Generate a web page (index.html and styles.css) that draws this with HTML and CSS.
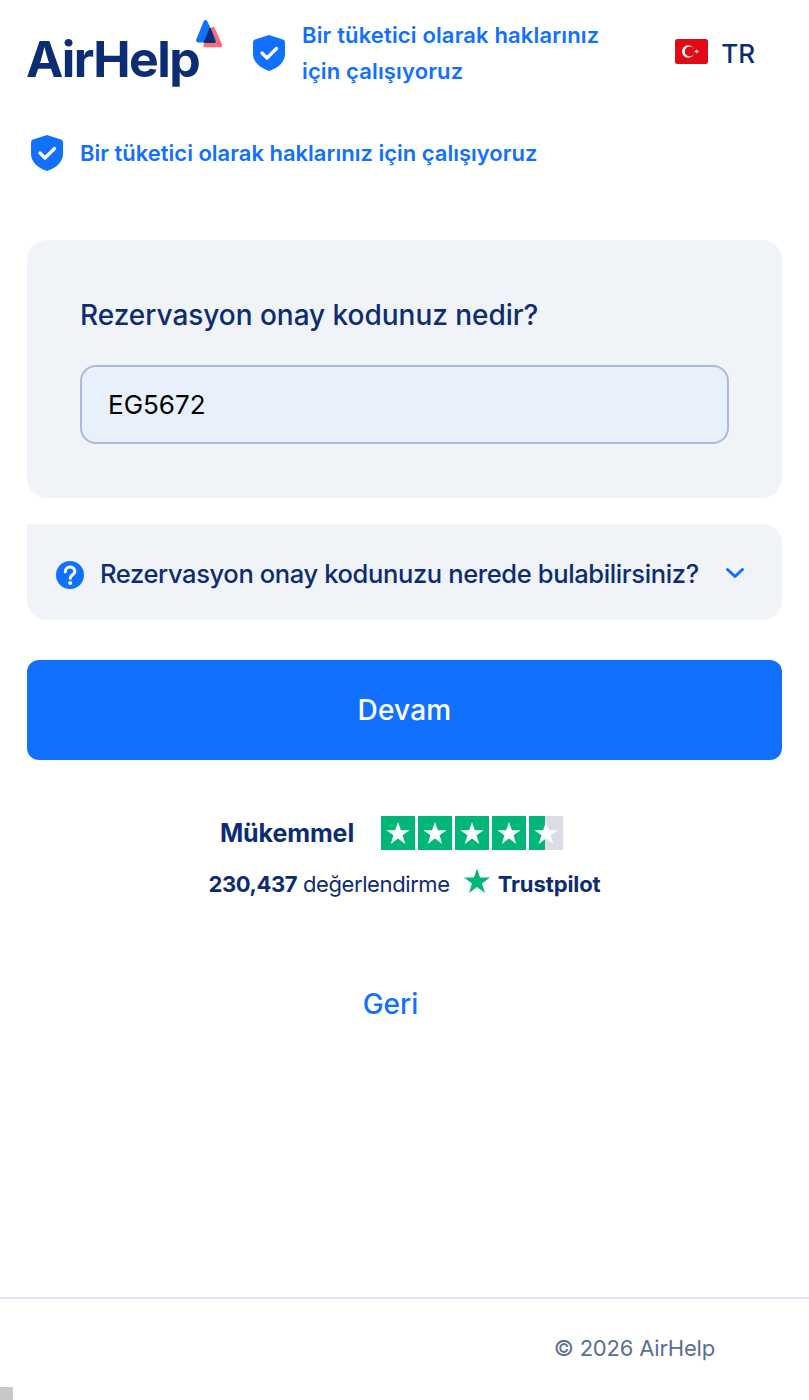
FILE: index.html
```html
<!DOCTYPE html>
<html lang="tr">
<head>
<meta charset="utf-8">
<title>AirHelp</title>
<link rel="stylesheet" href="styles.css">
</head>
<body>
<div class="page">
  <header class="topbar">
    <a class="logo">
      <span class="logo-word">AirHelp</span>
      <svg class="logo-mark" viewBox="0 0 28 29" aria-hidden="true">
        <path d="M18 9.5 L25.5 26.5 H10 Z" fill="#ff6b78" stroke="#ff6b78" stroke-width="3.5" stroke-linejoin="round"/>
        <path d="M10.5 3 L3 21.5 H19 Z" fill="#1270ff" stroke="#1270ff" stroke-width="4" stroke-linejoin="round"/>
        <path d="M15.2 9 L20.2 23.4 H9 Z" fill="#0c2c73" stroke="#0c2c73" stroke-width="1" stroke-linejoin="round"/>
      </svg>
    </a>
    <div class="promise">
      <svg class="shield" viewBox="0 0 32 38" aria-hidden="true">
        <path d="M16 1 L30 5.5 Q32 6.2 32 8.5 V20 C32 28 25 34 16 37 C7 34 0 28 0 20 V8.5 Q0 6.2 2 5.5 Z" fill="#1270ff"/>
        <path d="M9 19 L14 24 L23.5 14.5" fill="none" stroke="#fff" stroke-width="3.2" stroke-linecap="round" stroke-linejoin="round"/>
      </svg>
      <p class="promise-text">Bir tüketici olarak haklarınız<br>için çalışıyoruz</p>
    </div>
    <div class="lang">
      <svg class="flag" viewBox="0 0 33 25" aria-hidden="true">
        <rect width="33" height="25" rx="2.5" fill="#e30a17"/>
        <circle cx="13.2" cy="12.5" r="6.2" fill="#fff"/>
        <circle cx="14.8" cy="12.5" r="5" fill="#e30a17"/>
        <path d="M19 12.5 L23.6 10.9 L22 12.5 L23.6 14.1 Z M21.5 9.6 L22.1 15.4 L20.4 11.2 L24.2 12.5 L20.4 13.8 Z" fill="#fff"/>
      </svg>
      <span class="lang-code">TR</span>
    </div>
  </header>

  <div class="promise promise-wide">
    <svg class="shield" viewBox="0 0 32 38" aria-hidden="true">
      <path d="M16 1 L30 5.5 Q32 6.2 32 8.5 V20 C32 28 25 34 16 37 C7 34 0 28 0 20 V8.5 Q0 6.2 2 5.5 Z" fill="#1270ff"/>
      <path d="M9 19 L14 24 L23.5 14.5" fill="none" stroke="#fff" stroke-width="3.2" stroke-linecap="round" stroke-linejoin="round"/>
    </svg>
    <p class="promise-text">Bir tüketici olarak haklarınız için çalışıyoruz</p>
  </div>

  <main class="content">
    <section class="card">
      <label class="card-title" for="code">Rezervasyon onay kodunuz nedir?</label>
      <input class="code-input" id="code" type="text" value="EG5672">
    </section>

    <section class="help">
      <svg class="help-icon" viewBox="0 0 28 28" aria-hidden="true">
        <circle cx="14" cy="14" r="14" fill="#1270ff"/>
        <path d="M9.3 10.8 C9.3 7.8 11.4 6 14 6 C16.8 6 18.8 7.8 18.8 10.4 C18.8 13.6 14.3 13.9 14.3 17.2" fill="none" stroke="#fff" stroke-width="3" stroke-linecap="round"/>
        <circle cx="14.2" cy="22" r="2" fill="#fff"/>
      </svg>
      <span class="help-text">Rezervasyon onay kodunuzu nerede bulabilirsiniz?</span>
      <svg class="chevron" viewBox="0 0 20 12" aria-hidden="true">
        <path d="M2.5 2.5 L10 9.5 L17.5 2.5" fill="none" stroke="#1270ff" stroke-width="3" stroke-linecap="round" stroke-linejoin="round"/>
      </svg>
    </section>

    <button class="primary" type="button">Devam</button>

    <section class="rating">
      <div class="rating-top">
        <strong class="rating-label">Mükemmel</strong>
        <div class="stars">
          <span class="star-box"><svg viewBox="0 0 24 24" aria-hidden="true"><path class="star" d="M12 2.5 L14.5 9.6 H22 L15.9 14 L18.2 21.5 L12 16.8 L5.8 21.5 L8.1 14 L2 9.6 H9.5 Z"/></svg></span>
          <span class="star-box"><svg viewBox="0 0 24 24" aria-hidden="true"><path class="star" d="M12 2.5 L14.5 9.6 H22 L15.9 14 L18.2 21.5 L12 16.8 L5.8 21.5 L8.1 14 L2 9.6 H9.5 Z"/></svg></span>
          <span class="star-box"><svg viewBox="0 0 24 24" aria-hidden="true"><path class="star" d="M12 2.5 L14.5 9.6 H22 L15.9 14 L18.2 21.5 L12 16.8 L5.8 21.5 L8.1 14 L2 9.6 H9.5 Z"/></svg></span>
          <span class="star-box"><svg viewBox="0 0 24 24" aria-hidden="true"><path class="star" d="M12 2.5 L14.5 9.6 H22 L15.9 14 L18.2 21.5 L12 16.8 L5.8 21.5 L8.1 14 L2 9.6 H9.5 Z"/></svg></span>
          <span class="star-box star-box-part"><svg viewBox="0 0 24 24" aria-hidden="true"><path class="star" d="M12 2.5 L14.5 9.6 H22 L15.9 14 L18.2 21.5 L12 16.8 L5.8 21.5 L8.1 14 L2 9.6 H9.5 Z"/></svg></span>
        </div>
      </div>
      <div class="rating-bottom">
        <span class="rating-count"><b>230,437</b> değerlendirme</span>
        <span class="tp">
          <svg class="tp-star" viewBox="0 0 24 24" aria-hidden="true"><path d="M12 0.5 L14.8 8.8 H24 L16.6 14.2 L19.4 23 L12 17.6 L4.6 23 L7.4 14.2 L0 8.8 H9.2 Z" fill="#00b67a"/></svg>
          <b class="tp-name">Trustpilot</b>
        </span>
      </div>
    </section>

    <a class="back">Geri</a>
  </main>

  <footer class="footer">
    <span class="copy">© 2026 AirHelp</span>
  </footer>
  <div class="corner-tab"></div>
</div>
</body>
</html>
```
FILE: styles.css
```css
* { box-sizing: border-box; }

html, body {
  margin: 0;
  padding: 0;
  background: #fff;
}

body {
  font-family: Inter, "Noto Sans", "Liberation Sans", sans-serif;
  color: #0c2c73;
}

p { margin: 0; }

.page {
  position: relative;
  width: 809px;
  height: 1400px;
  display: flex;
  flex-direction: column;
  overflow: hidden;
}

/* top bar */
.topbar {
  height: 106px;
  padding: 0 27px;
  display: flex;
  align-items: center;
}

.logo {
  position: relative;
  width: 198px;
  height: 106px;
  display: block;
  flex: none;
}

.logo-word {
  position: absolute;
  left: -1px;
  top: 24px;
  font-size: 50px;
  line-height: 70px;
  font-weight: 650;
  letter-spacing: -1.6px;
  color: #0c2c73;
}

.logo-mark {
  position: absolute;
  left: 168px;
  top: 19px;
  width: 28px;
  height: 29px;
}

.promise {
  display: flex;
  align-items: center;
  gap: 17px;
}

.topbar .promise {
  margin-left: 28px;
  width: 400px;
}

.topbar .promise-text { letter-spacing: 0.15px; }

.promise-wide {
  height: 36px;
  margin: 29px 0 0 31px;
}

.shield {
  width: 32px;
  height: 38px;
  flex: none;
}

.promise-text {
  font-size: 22px;
  line-height: 36px;
  font-weight: 600;
  color: #1270ff;
}

.lang {
  margin-left: auto;
  margin-right: 27px;
  display: flex;
  align-items: center;
  gap: 13px;
}

.flag {
  width: 33px;
  height: 25px;
  margin-bottom: 3px;
}

.lang-code {
  font-size: 26px;
  font-weight: 500;
}

/* form area */
.content {
  margin-top: 69px;
  padding: 0 27px;
  display: flex;
  flex-direction: column;
}

.card {
  height: 258px;
  padding: 55px 53px 0;
  border-radius: 20px;
  background: #f0f4f9;
}

.card-title {
  display: block;
  font-size: 28px;
  line-height: 40px;
  font-weight: 500;
  letter-spacing: -0.03px;
}

.code-input {
  display: block;
  width: 649px;
  height: 79px;
  margin-top: 30px;
  padding: 0 26px 1px;
  border: 2px solid #a9bbd6;
  border-radius: 16px;
  background: #e8f0fc;
  font: 400 26px Inter, "Noto Sans", sans-serif;
  color: #000;
  outline: none;
}

.help {
  height: 96px;
  margin-top: 26px;
  padding: 2px 37px 0 29px;
  display: flex;
  align-items: center;
  gap: 16px;
  border-radius: 0 20px 20px 20px;
  background: #f0f4f9;
}

.help-icon {
  width: 28px;
  height: 28px;
  margin-top: 3px;
  flex: none;
}

.help-text {
  font-size: 25.5px;
  font-weight: 500;
  white-space: nowrap;
  letter-spacing: -0.37px;
}

.chevron {
  width: 20px;
  height: 12px;
  margin-left: auto;
  flex: none;
}

.primary {
  height: 100px;
  margin-top: 40px;
  border: 0;
  border-radius: 12px;
  background: #1270ff;
  color: #fff;
  font: 500 28px Inter, "Noto Sans", sans-serif;
  letter-spacing: 0.2px;
}

/* trust score */
.rating {
  margin-top: 56px;
  display: flex;
  flex-direction: column;
  align-items: center;
}

.rating-top {
  margin-right: 26px;
  display: flex;
  align-items: center;
  gap: 27px;
}

.rating-label {
  font-size: 25px;
  font-weight: 700;
  letter-spacing: -0.1px;
}

.stars {
  display: flex;
  gap: 3px;
}

.star-box {
  width: 34px;
  height: 34px;
  padding: 3px;
  background: #00b67a;
}

.star-box svg {
  display: block;
  width: 28px;
  height: 28px;
}

.star-box-part {
  background: linear-gradient(90deg, #00b67a 47%, #dcdce6 47%);
}

.star { fill: #fff; }

.rating-bottom {
  margin-top: 18px;
  display: flex;
  align-items: center;
  gap: 14px;
  font-size: 22px;
}

.rating-count { letter-spacing: -0.4px; }

.tp {
  display: flex;
  align-items: center;
  gap: 8px;
}

.tp-star {
  width: 26px;
  height: 26px;
  margin-bottom: 5px;
}

.tp-name { letter-spacing: -0.1px; }

.back {
  align-self: center;
  margin-top: 85px;
  margin-right: 28px;
  font-size: 28px;
  line-height: 40px;
  font-weight: 500;
  color: #1270ff;
}

/* footer */
.footer {
  position: absolute;
  left: 0;
  right: 0;
  top: 1297px;
  height: 103px;
  padding: 36px 94px 0 0;
  border-top: 2px solid #dce6f2;
  text-align: right;
}

.copy {
  font-size: 22px;
  letter-spacing: -0.2px;
  color: #5a6f94;
}

.corner-tab {
  position: absolute;
  left: 0;
  bottom: 0;
  width: 13px;
  height: 13px;
  background: #c8c8c8;
}
```
